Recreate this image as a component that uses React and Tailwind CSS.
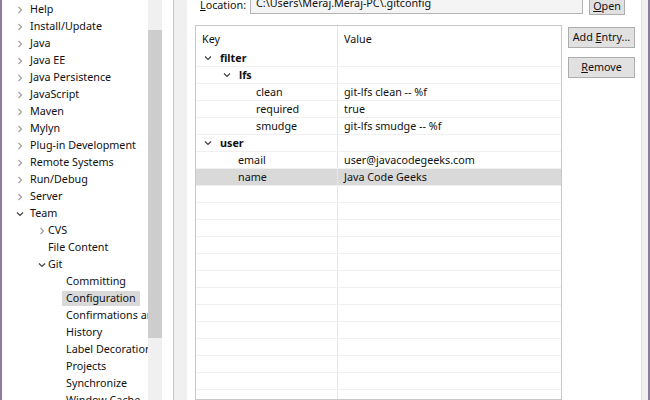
import React from 'react';

const treeItems = [
  { label: 'Help', level: 0, state: 'closed' },
  { label: 'Install/Update', level: 0, state: 'closed' },
  { label: 'Java', level: 0, state: 'closed' },
  { label: 'Java EE', level: 0, state: 'closed' },
  { label: 'Java Persistence', level: 0, state: 'closed' },
  { label: 'JavaScript', level: 0, state: 'closed' },
  { label: 'Maven', level: 0, state: 'closed' },
  { label: 'Mylyn', level: 0, state: 'closed' },
  { label: 'Plug-in Development', level: 0, state: 'closed' },
  { label: 'Remote Systems', level: 0, state: 'closed' },
  { label: 'Run/Debug', level: 0, state: 'closed' },
  { label: 'Server', level: 0, state: 'closed' },
  { label: 'Team', level: 0, state: 'open' },
  { label: 'CVS', level: 1, state: 'closed' },
  { label: 'File Content', level: 1, state: 'leaf' },
  { label: 'Git', level: 1, state: 'open' },
  { label: 'Committing', level: 2, state: 'leaf' },
  { label: 'Configuration', level: 2, state: 'leaf', selected: true },
  { label: 'Confirmations and Warnings', level: 2, state: 'leaf' },
  { label: 'History', level: 2, state: 'leaf' },
  { label: 'Label Decorations', level: 2, state: 'leaf' },
  { label: 'Projects', level: 2, state: 'leaf' },
  { label: 'Synchronize', level: 2, state: 'leaf' },
  { label: 'Window Cache', level: 2, state: 'leaf' },
];

const configRows = [
  { key: 'filter', level: 0, state: 'open', bold: true },
  { key: 'lfs', level: 1, state: 'open', bold: true },
  { key: 'clean', level: 2, value: 'git-lfs clean -- %f' },
  { key: 'required', level: 2, value: 'true' },
  { key: 'smudge', level: 2, value: 'git-lfs smudge -- %f' },
  { key: 'user', level: 0, state: 'open', bold: true },
  { key: 'email', level: 1, value: 'user@javacodegeeks.com' },
  { key: 'name', level: 1, value: 'Java Code Geeks', selected: true },
];

function Chevron({ open }) {
  if (open) {
    return (
      <svg width="8" height="8" viewBox="0 0 8 8" className="shrink-0">
        <polyline points="1,2.5 4,5.5 7,2.5" fill="none" stroke="#404040" strokeWidth="1.2" />
      </svg>
    );
  }
  return (
    <svg width="8" height="8" viewBox="0 0 8 8" className="shrink-0">
      <polyline points="2.5,1 5.5,4 2.5,7" fill="none" stroke="#a0a0a0" strokeWidth="1.2" />
    </svg>
  );
}

function TreeRow({ item }) {
  const indent = [14, 36, 0][item.level];
  let lead;
  if (item.state === 'leaf') {
    // leaf rows only get a spacer, the selected one carries its own padding
    const w = item.level === 2 ? (item.selected ? 60 : 64) : 46;
    lead = <div style={{ width: w }} className="shrink-0" />;
  } else {
    lead = (
      <>
        <div style={{ width: indent }} className="shrink-0" />
        <Chevron open={item.state === 'open'} />
        <div className={item.level === 0 ? 'w-[6px] shrink-0' : 'w-[2px] shrink-0'} />
      </>
    );
  }
  return (
    <div className="h-[17px] flex items-center whitespace-nowrap">
      {lead}
      <span className={item.selected ? 'bg-[#d9d9d9] px-[4px] leading-[15px]' : ''}>{item.label}</span>
    </div>
  );
}

function ConfigRow({ row }) {
  const pad = [8, 27, 0][row.level];
  return (
    <div className={`h-[17px] flex border-b border-[#f0f0f0] ${row.selected ? 'bg-[#d9d9d9]' : ''}`}>
      <div className="w-[142px] shrink-0 flex items-center border-r border-[#e6e6e6] whitespace-nowrap">
        {row.state === 'open' ? (
          <>
            <div style={{ width: pad }} className="shrink-0" />
            <Chevron open />
            <span className={`ml-[8px] ${row.bold ? 'font-bold' : ''}`}>{row.key}</span>
          </>
        ) : (
          <span className={row.level === 2 ? 'pl-[60px]' : 'pl-[42px]'}>{row.key}</span>
        )}
      </div>
      <div className="flex-1 flex items-center pl-[6px] whitespace-nowrap">{row.value}</div>
    </div>
  );
}

function Button({ children, className }) {
  return (
    <div className={`flex items-center justify-center bg-[#e1e1e1] border border-[#adadad] ${className}`}>
      {children}
    </div>
  );
}

export default function App() {
  const emptyRows = Array.from({ length: 14 });
  return (
    <div
      className="w-[650px] h-[400px] overflow-hidden flex bg-white text-[10.75px] text-[#111]"
      style={{ fontFamily: '"Noto Sans", "Open Sans", sans-serif' }}
    >
      <div className="w-[2px] shrink-0 bg-[#8c7d9c]" />

      {/* preference tree */}
      <div className="w-[146px] shrink-0 overflow-hidden pt-[1px]">
        {treeItems.map((item) => (
          <TreeRow key={item.label} item={item} />
        ))}
      </div>
      <div className="w-[14px] shrink-0 bg-[#f0f0f0] pt-[30px]">
        <div className="h-[308px] bg-[#cdcdcd]" />
      </div>
      <div className="w-[11px] shrink-0" />
      <div className="w-px shrink-0 bg-[#c6c6c6]" />
      <div className="w-[13px] shrink-0 bg-[#f0f0f0]" />

      {/* page */}
      <div className="flex-1 flex flex-col min-w-0">
        <div className="-mt-[8px] h-[23px] flex items-center">
          <span className="ml-[13px] w-[50px] shrink-0 pt-[4px]">
            <span className="underline">L</span>ocation:
          </span>
          <div className="w-[333px] h-[21px] shrink-0 flex items-end pb-[2px] pl-[5px] bg-[#f4f4f4] border border-[#b4b4b4] whitespace-nowrap">
            C:\Users\Meraj.Meraj-PC\.gitconfig
          </div>
          <Button className="ml-[6px] w-[36px] h-[23px] pt-[6px]">
            <span><span className="underline">O</span>pen</span>
          </Button>
        </div>

        <div className="mt-[10px] flex flex-1 min-h-0">
          <div className="ml-[8px] w-[367px] shrink-0 border border-[#c8c8c8] overflow-hidden">
            <div className="h-[24px] flex">
              <div className="w-[142px] shrink-0 border-r border-[#e6e6e6] pl-[6px] pt-[5px]">Key</div>
              <div className="flex-1 pl-[6px] pt-[5px]">Value</div>
            </div>
            {configRows.map((row) => (
              <ConfigRow key={row.key} row={row} />
            ))}
            {emptyRows.map((_, i) => (
              <ConfigRow key={i} row={{ key: '', level: 1, value: '' }} />
            ))}
          </div>
          <div className="ml-[6px] w-[67px] shrink-0 flex flex-col">
            <Button className="h-[21px] mt-[2px]">
              <span>Add <span className="underline">E</span>ntry...</span>
            </Button>
            <Button className="h-[21px] mt-[9px]">
              <span><span className="underline">R</span>emove</span>
            </Button>
          </div>
        </div>
      </div>

      <div className="w-[7px] shrink-0 bg-[#f0f0f0] border-l border-[#e0e0e0]" />
      <div className="w-[2px] shrink-0 bg-[#8c7d9c]" />
    </div>
  );
}
